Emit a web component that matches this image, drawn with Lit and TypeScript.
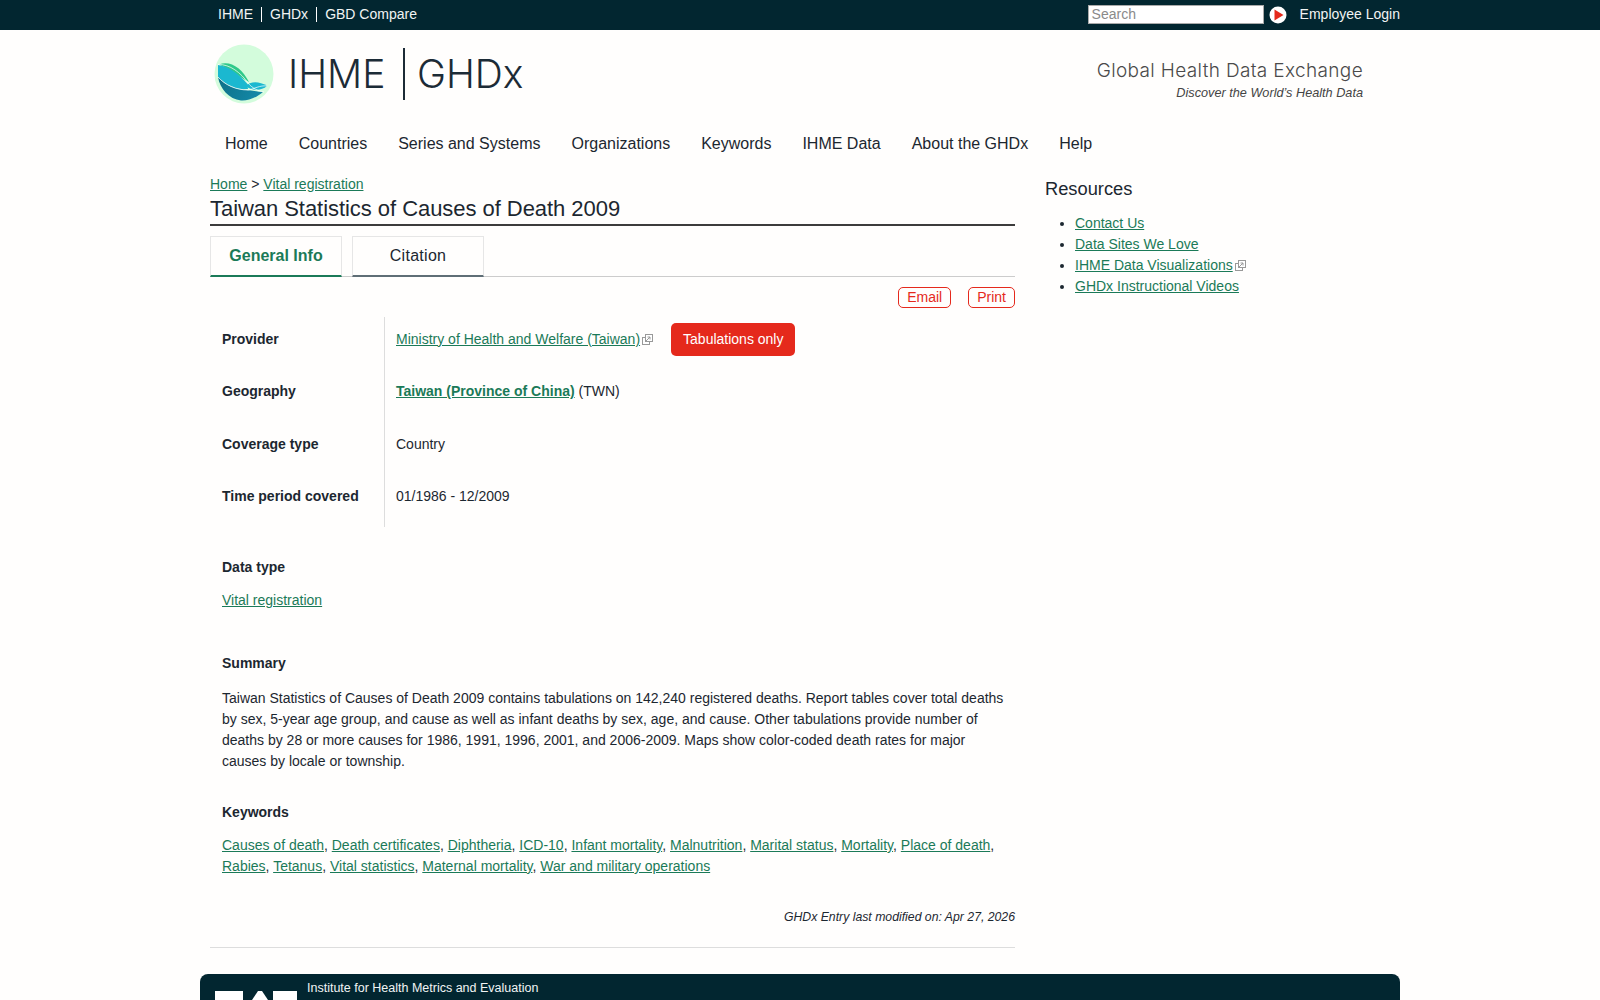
import { LitElement, html, css, svg } from "lit";
import { customElement } from "lit/decorators.js";

const extIcon = html`<svg class="ext" viewBox="0 0 11 11" width="11" height="11" aria-hidden="true">
  <rect x="0.5" y="3.5" width="7" height="7" fill="#fff" stroke="#999" stroke-width="1"></rect>
  <rect x="3.5" y="0.5" width="7" height="7" fill="#fff" stroke="#999" stroke-width="1"></rect>
  <path d="M4 7 L8 3 M5.5 3 H8 V5.5" fill="none" stroke="#999" stroke-width="1"></path>
</svg>`;

const logoMark = svg`
  <defs>
    <linearGradient id="deep" x1="0" y1="0" x2="1" y2="0.3">
      <stop offset="0" stop-color="#0e6f86"></stop>
      <stop offset="1" stop-color="#1387a6"></stop>
    </linearGradient>
  </defs>
  <circle cx="30" cy="30" r="29.5" fill="#d3fcdc"></circle>
  <path d="M5 20.5 C16 16 28 24 35 38 C27 34 16 25 5 20.5 Z" fill="#2fc98a"></path>
  <path d="M4 21 C14 22 25 30 33 39.5 L34 45 C24 46 12 42 4 33 Z" fill="#1bb8d0"></path>
  <path d="M4 33 C11 41 22 46 32 46 C38 46.5 44 48 49 48 C42 54 34 57 27 56.5 C15 55 6 45 4 33 Z" fill="url(#deep)"></path>
  <path d="M31 42 C37 37 45 37 53 42 C47 47 39 47 31 42 Z" fill="#1bb8d0"></path>
  <path d="M4 20.5 C16 20 27 29 34 39 C38 44 44 47 50 48 M4 33 C11 41 22 46 34 46 C40 45 46 41 53 42"
    fill="none" stroke="#fff" stroke-width="0.7"></path>
`;

const keywords = [
  "Causes of death",
  "Death certificates",
  "Diphtheria",
  "ICD-10",
  "Infant mortality",
  "Malnutrition",
  "Marital status",
  "Mortality",
  "Place of death",
  "Rabies",
  "Tetanus",
  "Vital statistics",
  "Maternal mortality",
  "War and military operations",
];

const navItems = [
  "Home",
  "Countries",
  "Series and Systems",
  "Organizations",
  "Keywords",
  "IHME Data",
  "About the GHDx",
  "Help",
];

@customElement("app-root")
export class AppRoot extends LitElement {
  static styles = css`
    :host {
      display: block;
      background: #fffefd;
      color: #1c2730;
      font-family: "Liberation Sans", Arial, sans-serif;
      font-size: 14px;
      line-height: 21px;
    }
    a {
      color: #1b7a58;
      text-decoration: underline;
    }
    .wrap {
      width: 1200px;
      margin: 0 auto;
    }
    .topbar {
      background: #022630;
      height: 30px;
    }
    .topbar .wrap {
      display: flex;
      justify-content: space-between;
      align-items: center;
      height: 29px;
    }
    .toplinks {
      display: flex;
      padding-left: 10px;
    }
    .toplinks a {
      color: #f1f4f4;
      text-decoration: none;
      line-height: 15px;
      padding: 0 8px;
      border-left: 1px solid #fff;
    }
    .toplinks a:first-child {
      border-left: none;
    }
    .topright {
      display: flex;
      align-items: center;
    }
    .search {
      width: 176px;
      height: 19px;
      box-sizing: border-box;
      border: 1px solid #aaa;
      background: #fff;
      color: #8a8a8a;
      padding: 0 3px;
      line-height: 17px;
      font-size: 14px;
    }
    .go {
      display: block;
      margin: 0 14px 0 5px;
    }
    .login {
      color: #f1f4f4;
      text-decoration: none;
      margin-left: -1px;
    }
    .brand {
      display: flex;
      justify-content: space-between;
      padding: 14px 37px 0 14px;
      height: 60px;
    }
    .logo {
      display: flex;
      align-items: center;
      font-family: Inter, sans-serif;
      font-weight: 300;
      font-size: 39px;
      line-height: 58px;
      color: #1c2b36;
    }
    .logo svg {
      margin-right: 14px;
    }
    .logo .bar {
      width: 1.5px;
      height: 52px;
      background: #1c2b36;
      margin: 0 12px 0 18px;
    }
    .tagline {
      text-align: right;
      padding-top: 15px;
    }
    .tagline .big {
      font-family: Inter, sans-serif;
      font-weight: 300;
      font-size: 19px;
      line-height: 24px;
      color: #4a4a4a;
      letter-spacing: 0.35px;
    }
    .tagline .small {
      font-size: 12.7px;
      font-style: italic;
      line-height: 20px;
      color: #444;
    }
    nav {
      display: flex;
      gap: 31px;
      padding: 29px 0 0 25px;
      font-size: 16px;
      line-height: 22px;
      height: 41px;
    }
    nav span {
      color: #1c2730;
    }
    .cols {
      display: flex;
      gap: 30px;
      padding: 0 10px;
    }
    main {
      width: 805px;
      flex: none;
    }
    .crumb {
      line-height: 20px;
    }
    h1 {
      margin: 1px 0 0;
      font-size: 22px;
      font-weight: 400;
      letter-spacing: -0.05px;
      line-height: 27px;
      padding-bottom: 2px;
      border-bottom: 2px solid #3c3c3c;
    }
    .tabs {
      display: flex;
      gap: 10px;
      margin-top: 10px;
      border-bottom: 1px solid #ccc;
      height: 40px;
    }
    .tab {
      width: 132px;
      height: 41px;
      box-sizing: border-box;
      border: 1px solid #e6e6e6;
      border-bottom: 2px solid #5f6e76;
      text-align: center;
      font-size: 16px;
      line-height: 37px;
      letter-spacing: 0.3px;
    }
    .tab.on {
      color: #1b7a58;
      font-weight: 700;
      letter-spacing: 0;
      border-bottom-color: #1b7a58;
    }
    .actions {
      display: flex;
      justify-content: flex-end;
      gap: 17px;
      margin-top: 10px;
    }
    .btn {
      box-sizing: border-box;
      height: 21px;
      line-height: 19px;
      border: 1px solid #e5291c;
      border-radius: 5px;
      color: #e5291c;
      padding: 0 8px;
    }
    .facts {
      display: grid;
      grid-template-columns: 175px 1fr;
      margin-top: 8.5px;
    }
    .facts > div {
      height: 52.5px;
      box-sizing: border-box;
      padding-bottom: 7px;
      display: flex;
      align-items: center;
    }
    .facts .k {
      font-weight: 700;
      padding-left: 12px;
      border-right: 1px solid #ddd;
    }
    .facts .v {
      padding-left: 11px;
    }
    .ext {
      margin-left: 2px;
      vertical-align: -1px;
    }
    .badge {
      background: #e5291c;
      color: #fff;
      border-radius: 5px;
      height: 33px;
      line-height: 33px;
      padding: 0 12px;
      margin-left: 18px;
    }
    .block {
      padding: 0 12px;
      margin-top: 30px;
    }
    .block h2 {
      margin: 0;
      font-size: 14px;
      font-weight: 700;
      line-height: 21px;
    }
    .block p {
      margin: 12px 0 0;
    }
    .block.summary {
      margin-top: 42px;
    }
    .block.summary p {
      margin-top: 14.5px;
      white-space: nowrap;
    }
    .modified {
      text-align: right;
      font-size: 12.25px;
      font-style: italic;
      line-height: 20px;
      margin-top: 30px;
    }
    hr {
      border: none;
      border-top: 1px solid #ddd;
      margin: 20px 0 0;
    }
    aside {
      flex: 1;
    }
    aside h3 {
      margin: 0;
      font-size: 18.3px;
      font-weight: 400;
      line-height: 24px;
      padding-top: 3px;
    }
    aside ul {
      margin: 12px 0 0;
      padding-left: 30px;
    }
    aside li {
      line-height: 21px;
    }
    footer {
      background: #022630;
      border-radius: 8px 8px 0 0;
      margin-top: 26px;
      height: 120px;
      display: flex;
      padding: 5px 0 0 15px;
      color: #f1f4f4;
      font-size: 12.5px;
      line-height: 18px;
    }
    footer svg {
      margin: 12px 10px 0 0;
      flex: none;
    }
  `;

  render() {
    return html`
      <div class="topbar">
        <div class="wrap">
          <div class="toplinks">
            <a>IHME</a><a>GHDx</a><a>GBD Compare</a>
          </div>
          <div class="topright">
            <div class="search">Search</div>
            <svg class="go" viewBox="0 0 18 18" width="18" height="18" aria-hidden="true">
              <circle cx="9" cy="9" r="8.5" fill="#fff"></circle>
              <path d="M5.5 3.5 L14.5 9 L5.5 14.5 Z" fill="#e5291c"></path>
            </svg>
            <a class="login">Employee Login</a>
          </div>
        </div>
      </div>
      <div class="wrap">
        <div class="brand">
          <div class="logo">
            <svg viewBox="0 0 60 60" width="60" height="60" aria-hidden="true">${logoMark}</svg>
            IHME<span class="bar"></span>GHDx
          </div>
          <div class="tagline">
            <div class="big">Global Health Data Exchange</div>
            <div class="small">Discover the World’s Health Data</div>
          </div>
        </div>
        <nav>${navItems.map((n) => html`<span>${n}</span>`)}</nav>
        <div class="cols">
          <main>
            <div class="crumb"><a>Home</a> &gt; <a>Vital registration</a></div>
            <h1>Taiwan Statistics of Causes of Death 2009</h1>
            <div class="tabs">
              <div class="tab on">General Info</div>
              <div class="tab">Citation</div>
            </div>
            <div class="actions">
              <span class="btn">Email</span>
              <span class="btn">Print</span>
            </div>
            <div class="facts">
              <div class="k">Provider</div>
              <div class="v">
                <span><a>Ministry of Health and Welfare (Taiwan)</a>${extIcon}</span>
                <span class="badge">Tabulations only</span>
              </div>
              <div class="k">Geography</div>
              <div class="v"><span><a><b>Taiwan (Province of China)</b></a> (TWN)</span></div>
              <div class="k">Coverage type</div>
              <div class="v">Country</div>
              <div class="k">Time period covered</div>
              <div class="v">01/1986 - 12/2009</div>
            </div>
            <div class="block">
              <h2>Data type</h2>
              <p><a>Vital registration</a></p>
            </div>
            <div class="block summary">
              <h2>Summary</h2>
              <p>
                Taiwan Statistics of Causes of Death 2009 contains tabulations on 142,240 registered
                deaths. Report tables cover total deaths<br />by sex, 5-year age group, and cause as
                well as infant deaths by sex, age, and cause. Other tabulations provide number
                of<br />deaths by 28 or more causes for 1986, 1991, 1996, 2001, and 2006-2009. Maps
                show color-coded death rates for major<br />causes by locale or township.
              </p>
            </div>
            <div class="block">
              <h2>Keywords</h2>
              <p>
                ${keywords.map(
                  (k, i) =>
                    html`<a>${k}</a>${i < keywords.length - 1 ? ", " : ""}`
                )}
              </p>
            </div>
            <div class="modified">GHDx Entry last modified on: Apr 27, 2026</div>
            <hr />
          </main>
          <aside>
            <h3>Resources</h3>
            <ul>
              <li><a>Contact Us</a></li>
              <li><a>Data Sites We Love</a></li>
              <li><a>IHME Data Visualizations</a>${extIcon}</li>
              <li><a>GHDx Instructional Videos</a></li>
            </ul>
          </aside>
        </div>
        <footer>
          <svg viewBox="0 0 82 40" width="82" height="40" aria-hidden="true">
            <path d="M0 0 H28 V40 H0 Z M58 0 H82 V40 H58 Z" fill="#fff"></path>
            <path d="M37 9 L43 0 H47 L53 9 V40 H37 Z" fill="#fff"></path>
          </svg>
          <div>Institute for Health Metrics and Evaluation</div>
        </footer>
      </div>
    `;
  }
}
